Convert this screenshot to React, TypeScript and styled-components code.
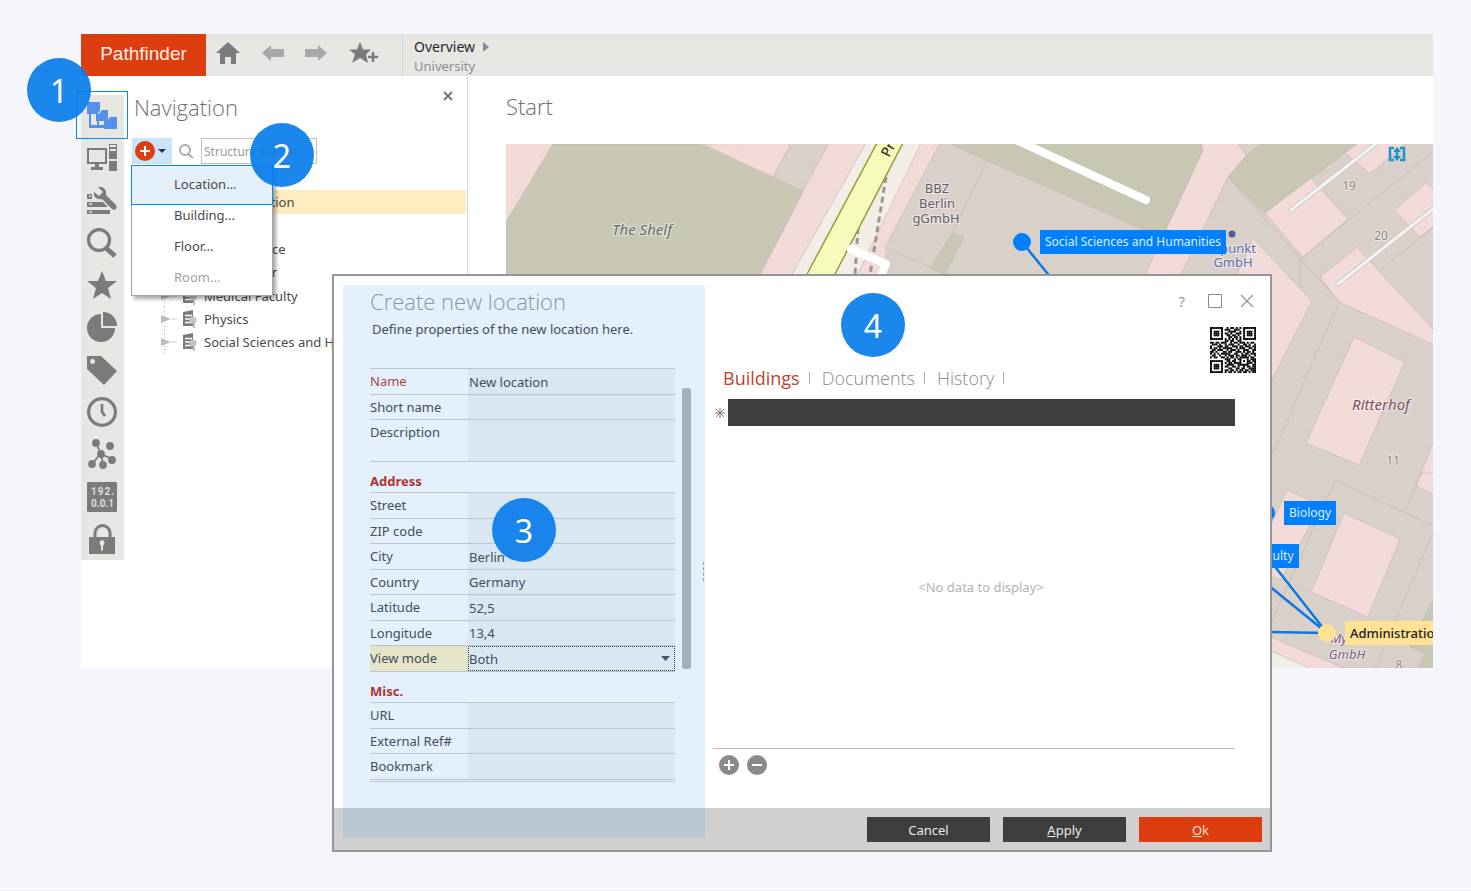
import React from "react";
import styled, { createGlobalStyle, css } from "styled-components";

const color = {
  page: "#f4f6fb",
  bar: "#e6e7e2",
  red: "#dc3e10",
  wine: "#c23f2a",
  blue: "#0a84ff",
  icon: "#7b7b7b",
  text: "#4a4a4a",
  line: "#cfcfcf",
};

const GlobalStyle = createGlobalStyle`
  * { box-sizing: border-box; }
  body {
    margin: 0;
    background: ${color.page};
    color: ${color.text};
    font-family: "Noto Sans", "Open Sans", sans-serif;
    font-size: 13px;
    line-height: 18px;
  }
  button, input, select, textarea { font: inherit; color: inherit; }
  button { border: 0; padding: 0; background: none; cursor: pointer; }
  h1, h2, p { margin: 0; }
`;

const Page = styled.main`
  position: relative;
  min-height: 890px;
  padding: 34px 38px 40px 81px;
  border-top: 1px solid #fff;
  margin-top: -1px;
  border-bottom: 1px solid #fff;
`;

const AppWindow = styled.section`
  background: #fff;
  overflow: hidden;
`;

const TopBar = styled.header`
  display: flex;
  align-items: stretch;
  height: 42px;
  background: ${color.bar};
`;

const Brand = styled.div`
  display: flex;
  align-items: center;
  justify-content: center;
  width: 125px;
  padding-bottom: 2px;
  background: ${color.red};
  color: #fdeee8;
  font: 19px "Liberation Sans", sans-serif;
`;

const TopIcons = styled.nav`
  display: flex;
  align-items: center;
  justify-content: space-between;
  width: 197px;
  padding: 0 23px 0 10px;
  border-right: 1px solid #d2d3cf;
`;

const Crumbs = styled.div`
  padding: 4px 11px 0;
  line-height: 20px;
  color: #8d8d8d;
`;

const CrumbMain = styled.div`
  display: flex;
  align-items: center;
  gap: 8px;
  height: 18px;
  font-size: 14px;
  color: #262626;
`;

const Body = styled.div`
  display: flex;
  align-items: flex-start;
`;

const SideBar = styled.nav`
  display: flex;
  flex-direction: column;
  flex: none;
  width: 43px;
  min-height: 465px;
  margin-top: 19px;
  padding-right: 2px;
  background: ${color.bar};
`;

const SideButton = styled.button`
  flex: 1;
  display: flex;
  align-items: center;
  justify-content: center;
`;

const NavPanel = styled.aside`
  flex: none;
  width: 344px;
  min-height: 592px;
  border-right: 1px solid #dadada;
`;

const NavHead = styled.div`
  display: flex;
  justify-content: space-between;
  height: 62px;
  padding: 11px 14px 0 10px;
`;

const Title = styled.h1`
  font-family: "Open Sans", sans-serif;
  font-size: 22px;
  font-weight: 300;
  line-height: 40px;
  color: #6f6f6f;
`;

const PanelClose = styled.button`
  display: flex;
  align-self: flex-start;
  padding: 4px 0;
`;

const NavTools = styled.div`
  display: flex;
  align-items: center;
  height: 26px;
  padding-left: 8px;
`;

const AddButton = styled.button`
  display: flex;
  align-items: center;
  justify-content: space-between;
  width: 40px;
  height: 26px;
  padding: 0 6px 0 3px;
  background: #cbe3f7;
`;

const SearchLabel = styled.label`
  display: flex;
  align-items: center;
  gap: 7px;
  padding-left: 6px;
`;

const SearchInput = styled.input`
  width: 116px;
  height: 26px;
  padding: 0 2px;
  border: 1px solid #c4c4c4;
  font-size: 12px;
  outline: 0;
  &::placeholder { color: #9b9b9b; opacity: 1; }
`;

const Tree = styled.ul`
  display: grid;
  grid-auto-rows: 1fr;
  height: 190px;
  margin: 0;
  padding: 3px 1px 0 8px;
  list-style: none;
`;

const TreeRow = styled.li<{ $level?: number; $on?: boolean }>`
  display: flex;
  align-items: center;
  gap: 7px;
  padding-left: ${(p) => (p.$level ? 29 : 8)}px;
  background: ${(p) => (p.$on ? "#ffedc2" : "transparent")};
  white-space: nowrap;
  svg { flex: none; }
`;

const Main = styled.section`
  flex: 1;
  min-width: 0;
  padding: 10px 0 0 38px;
`;

const MapFrame = styled.div`
  position: relative;
  height: 524px;
  margin-top: 18px;
  overflow: hidden;
`;

const MapSvg = styled.svg`
  display: block;
  width: 100%;
  height: 524px;
`;

const MapLabel = styled.div<{ $x: number; $y: number; $tone?: "sand" }>`
  position: absolute;
  left: ${(p) => p.$x}px;
  top: ${(p) => p.$y}px;
  padding: 3px 5px;
  background: ${(p) => (p.$tone ? "#ffe293" : "#0080ff")};
  color: ${(p) => (p.$tone ? "#222" : "#dceeff")};
  font-size: ${(p) => (p.$tone ? 13 : 12)}px;
  font-weight: ${(p) => (p.$tone ? 500 : 400)};
  white-space: nowrap;
`;

const Highlight = styled.div<{ $x: number; $y: number; $w: number; $h: number }>`
  position: absolute;
  left: ${(p) => p.$x}px;
  top: ${(p) => p.$y}px;
  width: ${(p) => p.$w}px;
  height: ${(p) => p.$h}px;
  border: 1px solid ${color.blue};
  pointer-events: none;
`;

const Marker = styled.div<{ $x: number; $y: number }>`
  position: absolute;
  left: ${(p) => p.$x}px;
  top: ${(p) => p.$y}px;
  display: flex;
  align-items: center;
  justify-content: center;
  width: 64px;
  height: 64px;
  border-radius: 50%;
  background: rgba(10, 125, 235, 0.93);
  color: #fff;
  font: 32px "Noto Sans", sans-serif;
  pointer-events: none;
`;

const Menu = styled.div`
  position: absolute;
  left: 131px;
  top: 165px;
  width: 142px;
  padding: 2px 0 3px;
  border: 1px solid #a5a5a5;
  background: #fff;
  box-shadow: 3px 3px 4px rgba(0, 0, 0, 0.35);
  display: flex;
  flex-direction: column;
  isolation: isolate;
`;

const MenuItem = styled.button<{ $on?: boolean }>`
  height: 31px;
  padding-left: 42px;
  text-align: left;
  &:disabled { color: #a2a2a2; }
  ${(p) =>
    p.$on &&
    css`
      position: relative;
      &::before {
        content: "";
        position: absolute;
        z-index: -1;
        inset: -3px -1px -6px;
        border: 1px solid ${color.blue};
        background: #e4f1fd;
      }
    `}
`;

const Dialog = styled.section`
  position: absolute;
  left: 332px;
  top: 274px;
  width: 940px;
  border: 2px solid #949698;
  background: #fff;
`;

const DialogBody = styled.div`
  display: flex;
  height: 532px;
`;

const Wash = styled.div`
  position: absolute;
  inset: 9px auto 12px 9px;
  width: 362px;
  background: rgba(0, 120, 240, 0.104);
  pointer-events: none;
`;

const FormPane = styled.div`
  flex: none;
  width: 371px;
  padding: 5px 14px 0 36px;
`;

const DialogTitle = styled(Title).attrs({ as: "h2" })`
  color: #9a9a9a;
`;

const Intro = styled.p`
  padding-left: 2px;
  line-height: 16px;
  white-space: nowrap;
`;

const FormArea = styled.div`
  display: flex;
  align-items: flex-start;
  gap: 7px;
  margin-top: 31px;
`;

const Form = styled.form`
  width: 306px;
`;

const Group = styled.div<{ $h: number; $end?: boolean }>`
  display: flex;
  flex-direction: column;
  height: ${(p) => p.$h}px;
  border-bottom: ${(p) => (p.$end ? "3px double" : "1px solid")} ${color.line};
`;

const GroupTitle = styled.h2`
  height: 30px;
  padding-top: 4px;
  color: #c22c18;
  font-size: 13px;
  font-weight: 700;
  line-height: 30px;
`;

const Field = styled.label<{ $tall?: boolean; $sel?: boolean; $must?: boolean }>`
  display: grid;
  grid-template-columns: 98px 1fr;
  flex: ${(p) => (p.$tall ? "0 0 42px" : "1")};
  min-height: 0;
  border-top: 1px solid ${color.line};
  color: ${(p) => (p.$must ? color.wine : color.text)};
  line-height: 25px;
  background: ${(p) => (p.$sel ? "#fff1c4" : "transparent")};
`;

const control = css`
  width: 100%;
  height: 100%;
  min-height: 0;
  padding: 0 1px;
  border: 0;
  border-radius: 0;
  background: #f3f4f4;
  color: ${color.text};
  outline: 0;
`;
const Input = styled.input`${control}`;
const Area = styled.textarea`${control} resize: none;`;
const SelectWrap = styled.span`
  position: relative;
  display: block;
  min-height: 0;
  svg { position: absolute; right: 5px; top: 10px; pointer-events: none; }
`;
const Select = styled.select`
  ${control}
  padding: 0;
  border: 1px dotted #333;
  appearance: none;
`;

const ScrollThumb = styled.div`
  flex: none;
  width: 9px;
  height: 281px;
  margin-top: 20px;
  border-radius: 3px;
  background: #b7b7b7;
`;

const ListPane = styled.div`
  position: relative;
  flex: 1;
  min-width: 0;
  display: flex;
  flex-direction: column;
  padding: 10px 15px 0 8px;
`;

const Splitter = styled.div`
  position: absolute;
  left: -2px;
  top: 286px;
  height: 19px;
  border-left: 1px dashed #a5a5a5;
`;

const WindowButtons = styled.div`
  display: flex;
  justify-content: flex-end;
  align-items: center;
  gap: 18px;
  height: 30px;
  padding-right: 1px;
  color: #999;
  font-size: 15px;
  button { display: flex; }
  button:first-child { padding-right: 5px; }
`;

const Code = styled.div`
  align-self: flex-end;
  height: 46px;
  margin: 11px -1px 0 0;
`;

const Tabs = styled.div`
  display: flex;
  align-items: center;
  height: 30px;
  margin-top: -10px;
  padding-left: 10px;
`;

const Tab = styled.button<{ $on?: boolean }>`
  display: flex;
  align-items: center;
  color: ${(p) => (p.$on ? color.wine : "#8c8c8c")};
  font: 18px/30px "Open Sans", sans-serif;
  font-weight: ${(p) => (p.$on ? 400 : 300)};
  &::after {
    content: "";
    height: 12px;
    margin: 0 12px 0 9px;
    border-left: 1px solid #b0b0b0;
  }
`;

const GridHead = styled.div`
  display: flex;
  align-items: center;
  gap: 3px;
  height: 27px;
  margin: 6px 20px 0 2px;
`;

const GridBar = styled.div`
  flex: 1;
  height: 27px;
  background: #3e3e3e;
`;

const Empty = styled.div`
  display: flex;
  align-items: center;
  justify-content: center;
  height: 323px;
  margin: 0 20px 0 0;
  padding-left: 14px;
  border-bottom: 1px solid #bdbdbd;
  color: #b2b2b2;
`;

const RowButtons = styled.div`
  display: flex;
  gap: 8px;
  padding: 6px 6px;
  button { display: flex; }
`;

const Footer = styled.footer`
  display: flex;
  justify-content: flex-end;
  gap: 13px;
  height: 42px;
  padding: 9px 8px 8px;
  background: #d0d0d0;
`;

const Action = styled.button<{ $main?: boolean }>`
  width: 123px;
  background: ${(p) => (p.$main ? color.red : "#3e3e3e")};
  color: ${(p) => (p.$main ? "#fbd9cd" : "#ececec")};
`;

const G = color.icon;

const I = ({ children, size = 30 }: { children: React.ReactNode; size?: number }) => (
  <svg width={size} height={size} viewBox="0 0 30 30" fill={G} aria-hidden="true">
    {children}
  </svg>
);

const sideIcons: [string, React.ReactNode][] = [
  ["Structure", (
    <g fill="#5590ea">
      <path d="M2 11h2v13h13v3H2z" />
      <path d="M10 18h2v7h-2z" />
      <path d="M0 1h13v9l-3 3H0z" />
      <path d="M9 11l3 2 3-4h6v11H9z" />
      <path d="M17 18l3 2 3-4h7v12H17z" />
    </g>
  )],
  ["Devices", (
    <g>
      <path fillRule="evenodd" d="M0 5h20v16H0z M2 7v12h16V7z" />
      <path d="M8 21h4v3h4v3H4v-3h4z M22 1h8v15h-8z M22 18h8v10h-8z" />
      <path d="M23 3h6M23 7h6" stroke={color.bar} strokeWidth="2" />
    </g>
  )],
  ["Tools", (
    <g>
      <path d="M0 8h5v5H0z M0 16h16l5 5H0z M0 24h23v4H0z" />
      <path d="M2 10h2M2 18h3M2 26h3" stroke={color.bar} strokeWidth="1.500" />
      <path d="M11 1c5-1 9 3 8 8l10 10c2 3-1 6-4 4L15 13c-5 1-9-2-8-7l5 4 4-4z" />
    </g>
  )],
  ["Search", (
    <g fill="none" stroke={G}>
      <circle cx="12" cy="12" r="10.500" strokeWidth="3.300" />
      <path d="M19 20l9 8" strokeWidth="5" />
    </g>
  )],
  ["Favourites", <path d="M15 1l4 10h11l-9 7 3 11-9-6-9 6 3-11-9-7h11z" />],
  ["Reports", (
    <g>
      <path d="M14 2v14h14a14 14 0 1 1-14-14z" />
      <path d="M16 0a14 14 0 0 1 14 14H16z" />
    </g>
  )],
  ["Tags", <path fillRule="evenodd" d="M0 1h14l16 15-13 14L0 14z M5.500 4a2.500 2.500 0 1 0 .1 0z" />],
  ["Recent", (
    <g fill="none" stroke={G}>
      <circle cx="15" cy="15" r="13.400" strokeWidth="3.200" />
      <path d="M15 7v8l3 4" strokeWidth="2.600" />
    </g>
  )],
  ["Topology", (
    <g>
      <path d="M9 4l5 11 11 5M14 14l-9 11M14 14l2 12" stroke={G} strokeWidth="1.800" fill="none" />
      {[[9, 4], [23, 7], [14, 15], [25, 21], [5, 25], [16, 26]].map(([x, y]) => (
        <circle key={x} cx={x} cy={y} r="3.900" />
      ))}
    </g>
  )],
  ["IP addresses", (
    <g>
      <rect width="30" height="30" rx="1" />
      <g fill="#dedede" fontFamily="Roboto, sans-serif" fontWeight="700" fontSize="10">
        <text x="4" y="13" letterSpacing="1">192.</text>
        <text x="4" y="25">0.0.1</text>
      </g>
    </g>
  )],
  ["Security", (
    <g>
      <path d="M8 14V9a7 7 0 0 1 15 0v5" fill="none" stroke={G} strokeWidth="3" />
      <path fillRule="evenodd" d="M2 13h26v17H2z M15 16a3 3 0 0 0-1 5.500v5h2v-5A3 3 0 0 0 15 16z" />
    </g>
  )],
];

const TreeIcon = () => (
  <svg width="36" height="22" viewBox="0 0 36 22" aria-hidden="true">
    <path d="M3.500 0v22" stroke="#bbb" strokeDasharray="1 2" />
    <path d="M0 7l10 4-10 4z" fill="#bdbdbd" />
    <path d="M10 11h6" stroke="#ccc" />
    <path d="M22 4l10-2v16H22z" fill="#7b7b7b" />
    <path d="M24 7.500h7M24 11h6M24 14.500h7" stroke="#fff" strokeWidth="1.500" />
    <circle cx="32" cy="12" r="3.600" fill="#c4c4c4" />
    <path d="M33 14v6" stroke="#c4c4c4" strokeWidth="2" />
  </svg>
);

const qr = [
  "1111111001011010101111111",
  "1000001011100111001000001",
  "1011101000111100101011101",
  "1011101011010011101011101",
  "1011101001101101001011101",
  "1000001000110110101000001",
  "1111111010101010101111111",
  "0000000011011001100000000",
  "1101101110010110111010110",
  "0111010010111001001101001",
  "1000111011001110110111011",
  "1011010111110010111001101",
  "0110111001011101001110011",
  "1101000110110011101011010",
  "1010101111100110010110111",
  "0110010010111011011101001",
  "1011001101011010111110110",
  "0000000011100101100010111",
  "1111111001101100101011011",
  "1000001010110111100011101",
  "1011101001111001111110011",
  "1011101011001101001011011",
  "1011101000110011011001111",
  "1000001011011010110110111",
  "1111111010110101101101011",
];

const road = { stroke: "#fff", strokeLinecap: "round" as const, fill: "none" };
const edge = { stroke: "#c8b7b0", strokeWidth: 1 };

const CampusMap = () => (
  <MapSvg viewBox="506 144 927 524" preserveAspectRatio="xMinYMin slice" role="img" aria-label="Campus map">
    <rect x="506" y="144" width="927" height="524" fill="#d9d0c9" />
    <path d="M506 144H960L885 250V668H506z" fill="#f2dad9" />
    <g {...edge} strokeOpacity="0.700">
      <path fill="#c8c7b4" d="M553 144H700L803 192L760 275V400H506V222z" />
      <path fill="#f2dad9" d="M703 144L773 177L790 146L787 143z" />
      <path fill="#d9d0c9" d="M787 143L790 146L773 177L803 191L829 143z" />
      <path fill="#f1eee8" d="M866 143H921L857 276H791z" />
      <path fill="#d9d0c9" d="M940 143L885 248L945 273V290H1300V143z" />
      <path fill="#c8c7b4" d="M952 233L964 237L945 274L930 268z M949 143L970 153L1162 238L1203 150L1201 143z" />
      <path fill="none" d="M987 161L952 233" />
      <path fill="#f2dad9" d="M1201 143L1203 150L1145 275H1181L1228 177L1247 155L1237 143z" />
      <path fill="#c8c7b4" d="M1263 143L1247 155L1228 177L1264 213L1311 178L1358 143z" />
      <path fill="#f2dad9" d="M1265 213L1311 178L1348 219L1303 257z M1345 153L1358 143H1406L1370 174z" />
      <path fill="none" d="M1228 177L1339 302L1272 455M1345 153L1311 178M1303 257L1434 151M1380 270L1434 227" />
      <path fill="#f2dad9" d="M1426 183L1394 210L1420 237L1434 226V189z M1357 247L1320 277L1339 302L1434 345V330L1378 270z M1253 238L1312 301L1271 382L1190 380z" />
      <path fill="#f2dad9" d="M1354 337L1405 362L1359 465L1306 443z M1434 440L1416 486L1434 495z M1344 513L1400 539L1368 617L1311 592z M1287 490L1321 505L1281 580L1270 576V527z" />
      <path fill="none" d="M1335 480L1434 526M1335 480L1272 621M1421 472L1405 512M1420 473H1434M1434 530L1375 669" />
      <path fill="#f1eee8" d="M1271 650L1314 669H1271z" />
      <path fill="#f2dad9" d="M1271 637L1346 669H1312L1271 651z" />
      <path fill="#c8c7b4" d="M1434 597L1410 647L1425 653L1418 669H1434z" />
    </g>
    <path d="M886 177L870 275M858 228L855 275" stroke="#9a9793" strokeWidth="3" strokeDasharray="6 4" fill="none" />
    <path d="M877 143L806 276H834L903 143z" fill="#f6fabb" />
    <path d="M877 143L806 276M903 143L834 276" stroke="#92a03c" strokeWidth="1.500" />
    <path d="M851 249L886 264L877 285" strokeWidth="8" strokeLinejoin="round" {...road} />
    <path d="M1012 138L1146 200" strokeWidth="8" {...road} />
    <path d="M1291 210L1378 142M1338 284L1434 208" strokeWidth="5" strokeLinecap="round" stroke="#cfcac7" />
    <path d="M1291 210L1378 142M1338 284L1434 208" strokeWidth="3" strokeLinecap="round" stroke="#f3f3f3" />
    <g fontFamily="Noto Sans, sans-serif" fontSize="13" textAnchor="middle" paintOrder="stroke" stroke="#ffffff" strokeOpacity="0.500" strokeWidth="2">
      <g fontStyle="italic" fontSize="15">
        <text x="642" y="235" fill="#666">The Shelf</text>
        <text x="1381" y="410" fill="#7d4f58">Ritterhof</text>
        <g fill="#7a5d7e" fontSize="13">
          <text x="1342" y="643">MyL</text>
          <text x="1347" y="659">GmbH</text>
        </g>
      </g>
      <g fill="#5c5c66">
        <text x="937" y="193">BBZ</text>
        <text x="937" y="208">Berlin</text>
        <text x="936" y="223">gGmbH</text>
      </g>
      <g fill="#5b6ba8">
        <text x="1238" y="253">punkt</text>
        <text x="1233" y="267">GmbH</text>
      </g>
      <g fill="#8a8580" fontSize="12">
        <text x="1349" y="190">19</text>
        <text x="1381" y="240">20</text>
        <text x="1393" y="465">11</text>
        <text x="1399" y="669">8</text>
      </g>
    </g>
    <text transform="translate(889 158) rotate(-62)" fontFamily="Noto Sans, sans-serif" fontSize="14" fontWeight="500" fill="#333">Prinz</text>
    <circle cx="1232" cy="234" r="3.500" fill="#4d5c9c" />
    <g fill="none" stroke="#1b95cc" strokeWidth="2.500">
      <path d="M1394 148h-4v12h4M1400 148h4v12h-4" />
      <path d="M1397 149v10" />
      <path d="M1397 147l4 5h-8zM1397 161l4-5h-8z" fill="#1b95cc" stroke="none" />
    </g>
    <g stroke="#0b78e3" strokeWidth="2.500">
      <path d="M1022 242L1060 289M1262 550L1327 633M1262 580L1327 633M1262 632L1327 633" />
    </g>
    <circle cx="1022" cy="242" r="9" fill="#0080ff" />
    <circle cx="1266" cy="513" r="9" fill="#0080ff" />
    <circle cx="1327" cy="633" r="9" fill="#ffe293" />
  </MapSvg>
);

const tree = ["Administration", "Biology", "Earth Science", "Data Center", "Medical Faculty", "Physics", "Social Sciences and Humanities"];

const TextField = ({ label, value = "", must }: { label: string; value?: string; must?: boolean }) => (
  <Field $must={must}>
    {label}
    <Input defaultValue={value} />
  </Field>
);

export default function App() {
  return (
    <>
      <GlobalStyle />
      <Page>
        <AppWindow>
          <TopBar>
            <Brand>Pathfinder</Brand>
            <TopIcons aria-label="History">
              <button aria-label="Home">
                <svg width="24" height="22" viewBox="0 0 24 22" fill={G}><path d="M12 0l12 11h-4v11h-5v-7H9v7H4V11H0z" /></svg>
              </button>
              <button aria-label="Back">
                <svg width="22" height="16" viewBox="0 0 22 16" fill="#a8a8a6"><path d="M0 8l9-8v4h13v8H9v4z" /></svg>
              </button>
              <button aria-label="Forward">
                <svg width="22" height="16" viewBox="0 0 22 16" fill="#a8a8a6"><path d="M22 8l-9-8v4H0v8h13v4z" /></svg>
              </button>
              <button aria-label="Add favourite">
                <svg width="30" height="22" viewBox="0 0 30 22" fill={G}><path d="M11 0l3 7.500h8l-5 5 2 8.500-8-5-8 5 3-8.500-6-5h8z" /><path d="M24 9v11M18.500 14.500h11" stroke={color.bar} strokeWidth="5" /><path d="M24 10v10M19 15h10" stroke={G} strokeWidth="2.500" /></svg>
              </button>
            </TopIcons>
            <Crumbs>
              <CrumbMain>
                Overview
                <svg width="6" height="10" viewBox="0 0 6 10" fill="#8a8a8a"><path d="M0 0l6 5-6 5z" /></svg>
              </CrumbMain>
              University
            </Crumbs>
          </TopBar>
          <Body>
            <SideBar aria-label="Modules">
              {sideIcons.map(([name, icon]) => (
                <SideButton key={name} aria-label={name}><I>{icon}</I></SideButton>
              ))}
            </SideBar>
            <NavPanel>
              <NavHead>
                <Title>Navigation</Title>
                <PanelClose aria-label="Close panel">
                  <svg width="10" height="10" viewBox="0 0 10 10"><path d="M1 1l8 8M9 1L1 9" stroke="#777" strokeWidth="2" /></svg>
                </PanelClose>
              </NavHead>
              <NavTools>
                <AddButton aria-label="Add">
                  <svg width="20" height="20" viewBox="0 0 20 20"><circle cx="10" cy="10" r="10" fill={color.red} /><path d="M10 5v10M5 10h10" stroke="#fff" strokeWidth="2" /></svg>
                  <svg width="8" height="4" viewBox="0 0 8 4"><path d="M0 0h8L4 4z" fill="#333" /></svg>
                </AddButton>
                <SearchLabel>
                  <svg width="16" height="16" viewBox="0 0 16 16" fill="none" stroke="#ababab"><circle cx="7" cy="7" r="5" strokeWidth="2" /><path d="M10 11l5 4" strokeWidth="2" /></svg>
                  <SearchInput placeholder="Structure search" aria-label="Structure search" />
                </SearchLabel>
              </NavTools>
              <Tree>
                <TreeRow>University</TreeRow>
                {tree.map((name, i) => (
                  <TreeRow key={name} $level={1} $on={i === 0}><TreeIcon />{name}</TreeRow>
                ))}
              </Tree>
            </NavPanel>
            <Main>
              <Title>Start</Title>
              <MapFrame>
                <CampusMap />
                <MapLabel $x={534} $y={86}>Social Sciences and Humanities</MapLabel>
                <MapLabel $x={778} $y={357}>Biology</MapLabel>
                <MapLabel $x={696} $y={400}>Medical Faculty</MapLabel>
                <MapLabel $x={839} $y={477} $tone="sand">Administration</MapLabel>
              </MapFrame>
            </Main>
          </Body>
        </AppWindow>

        <Highlight $x={76} $y={91} $w={52} $h={48} />
        <Menu>
          <MenuItem $on>Location...</MenuItem>
          <MenuItem>Building...</MenuItem>
          <MenuItem>Floor...</MenuItem>
          <MenuItem disabled>Room...</MenuItem>
        </Menu>

        <Dialog role="dialog" aria-label="Create new location">
          <DialogBody>
            <FormPane>
              <DialogTitle>Create new location</DialogTitle>
              <Intro>Define properties of the new location here.</Intro>
              <FormArea>
                <Form>
                  <Group $h={94}>
                    <TextField label="Name" value="New location" must />
                    <TextField label="Short name" />
                    <Field $tall>Description<Area /></Field>
                  </Group>
                  <GroupTitle>Address</GroupTitle>
                  <Group $h={180}>
                    <TextField label="Street" />
                    <TextField label="ZIP code" />
                    <TextField label="City" value="Berlin" />
                    <TextField label="Country" value="Germany" />
                    <TextField label="Latitude" value="52,5" />
                    <TextField label="Longitude" value="13,4" />
                    <Field $sel>
                      View mode
                      <SelectWrap>
                        <Select defaultValue="Both"><option>Both</option></Select>
                        <svg width="9" height="5" viewBox="0 0 9 5"><path d="M0 0h9L4.500 5z" fill="#555" /></svg>
                      </SelectWrap>
                    </Field>
                  </Group>
                  <GroupTitle>Misc.</GroupTitle>
                  <Group $h={80} $end>
                    <TextField label="URL" />
                    <TextField label="External Ref#" />
                    <TextField label="Bookmark" />
                  </Group>
                </Form>
                <ScrollThumb />
              </FormArea>
            </FormPane>
            <ListPane>
              <Splitter />
              <WindowButtons>
                <button aria-label="Help">?</button>
                <button aria-label="Maximise"><svg width="14" height="14" viewBox="0 0 14 14"><path d="M.5.5h13v13H.5z" fill="none" stroke="#888" /></svg></button>
                <button aria-label="Close"><svg width="14" height="14" viewBox="0 0 14 14"><path d="M1 1l12 12M13 1L1 13" stroke="#999" strokeWidth="1.300" /></svg></button>
              </WindowButtons>
              <Code>
                <svg width="46" height="46" viewBox="0 0 25 25" role="img" aria-label="QR code">
                  {qr.map((row, y) => row.split("").map((c, x) => (c === "1" ? <rect key={`${x}-${y}`} x={x} y={y} width="1.050" height="1.050" /> : null)))}
                </svg>
              </Code>
              <Tabs>
                <Tab $on>Buildings</Tab>
                <Tab>Documents</Tab>
                <Tab>History</Tab>
              </Tabs>
              <GridHead>
                <svg width="10" height="10" viewBox="0 0 10 10"><path d="M5 0v10M0 5h10M1 1l8 8M9 1L1 9" stroke="#777" strokeWidth="1" /></svg>
                <GridBar />
              </GridHead>
              <Empty>&lt;No data to display&gt;</Empty>
              <RowButtons>
                <button aria-label="Add row"><svg width="20" height="20" viewBox="0 0 20 20"><circle cx="10" cy="10" r="10" fill="#8a8a8a" /><path d="M10 5v10M5 10h10" stroke="#fff" strokeWidth="2" /></svg></button>
                <button aria-label="Remove row"><svg width="20" height="20" viewBox="0 0 20 20"><circle cx="10" cy="10" r="10" fill="#8a8a8a" /><path d="M5 10h10" stroke="#fff" strokeWidth="2" /></svg></button>
              </RowButtons>
            </ListPane>
          </DialogBody>
          <Footer>
            <Action>Cancel</Action>
            <Action><u>A</u>pply</Action>
            <Action $main><u>O</u>k</Action>
          </Footer>
          <Wash />
        </Dialog>

        <Marker $x={27} $y={58}>1</Marker>
        <Marker $x={250} $y={123}>2</Marker>
        <Marker $x={492} $y={498}>3</Marker>
        <Marker $x={841} $y={293}>4</Marker>
      </Page>
    </>
  );
}
